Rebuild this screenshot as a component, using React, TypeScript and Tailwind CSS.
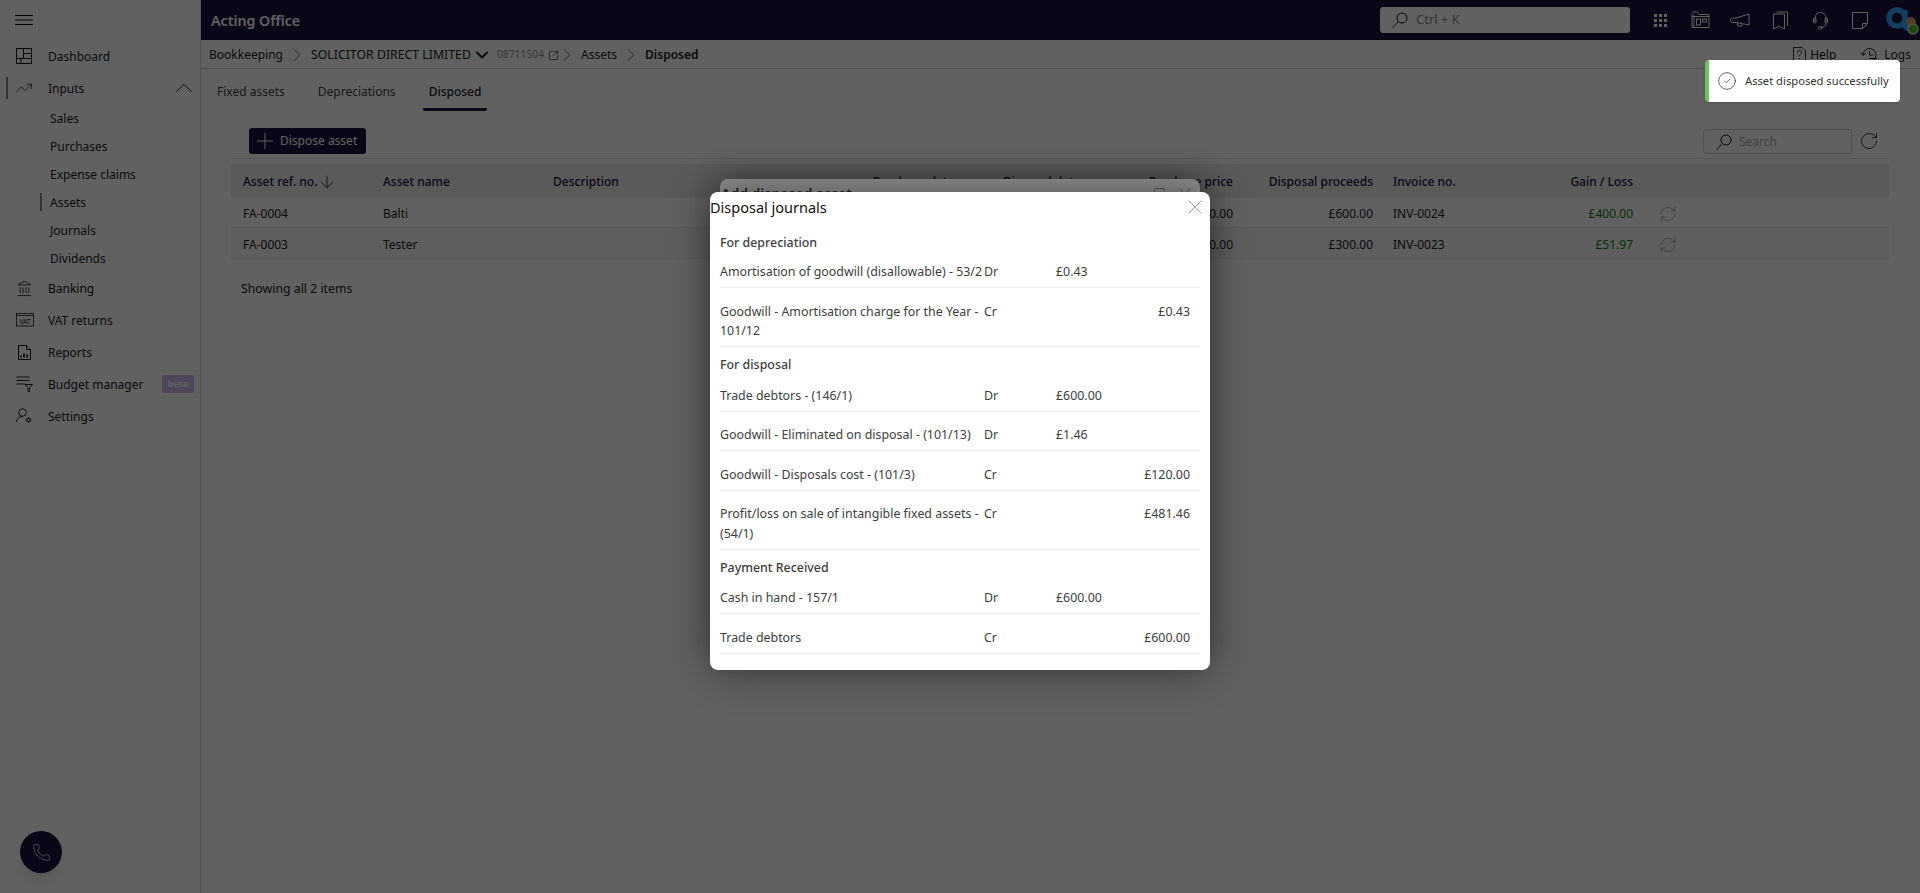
import React from 'react';
import {
  TrendingUp, ChevronUp, ChevronDown, ChevronRight, Landmark,
  Plus, ArrowDown, RotateCw, RefreshCw, X, Phone, CircleCheck, SquareArrowOutUpRight,
} from 'lucide-react';

const font = { fontFamily: '"Noto Sans", sans-serif' };

const HamburgerIcon = () => (
  <svg width="18" height="10" viewBox="0 0 18 10" fill="none" stroke="#111" strokeWidth="1">
    <path d="M0 0.5h18M0 5h18M0 9.5h18" />
  </svg>
);

const DashIcon = () => (
  <svg width="16" height="16" viewBox="0 0 16 16" fill="none" stroke="#111" strokeWidth="1">
    <rect x="0.5" y="0.5" width="15" height="15" />
    <path d="M7.5 0.5v10M7.5 5.5h8M0.5 10.5h15M5 10.5v5" />
  </svg>
);

const VatIcon = () => (
  <svg width="18" height="14" viewBox="0 0 18 14" fill="none" stroke="#111" strokeWidth="0.8">
    <rect x="0.5" y="0.5" width="17" height="12.5" />
    <path d="M0.5 2.5h17" />
    <text x="9" y="10.5" textAnchor="middle" fontSize="6.5" fill="#111" stroke="none" fontFamily="Liberation Sans">VAT</text>
  </svg>
);

const ReportIcon = () => (
  <svg width="13" height="15" viewBox="0 0 13 15" fill="none" stroke="#111" strokeWidth="1">
    <path d="M0.5 0.5h8l4 4v10h-12zM8.5 0.5v4h4" />
    <path d="M3 12.5v-2M6 12.5v-4M9 12.5v-3" strokeWidth="1.6" />
  </svg>
);

const BudgetIcon = () => (
  <svg width="17" height="16" viewBox="0 0 17 16" fill="none" stroke="#111" strokeWidth="0.9">
    <path d="M0.5 1h13M0.5 4.5h13M0.5 8h8" />
    <path d="M9 8.500h7.500l-3 3.300v3.700h-1.500v-3.700z" />
  </svg>
);

const SettingsIcon = () => (
  <svg width="16" height="16" viewBox="0 0 16 16" fill="none" stroke="#111" strokeWidth="0.9">
    <circle cx="6.500" cy="4.500" r="3.800" />
    <path d="M0.500 14c0-3 2-5.300 6-5.500" />
    <circle cx="12.500" cy="12" r="1.700" />
    <path d="M12.500 9v1.300M12.500 13.700V15M9.500 12h1.300M14.200 12h1.300M10.400 9.900l0.900 0.900M13.700 13.200l0.900 0.900M14.600 9.900l-0.900 0.900M11.300 13.200l-0.900 0.900" strokeWidth="0.800" />
  </svg>
);

const SearchIcon = ({ color = '#111' }: { color?: string }) => (
  <svg width="16" height="16" viewBox="0 0 16 16" fill="none" stroke={color} strokeWidth="1">
    <circle cx="10" cy="6" r="5" />
    <path d="M6.500 9.500L0.700 15.500" />
  </svg>
);

const FolderIcon = () => (
  <svg width="19" height="18" viewBox="0 0 19 18" fill="none" stroke="#fff" strokeWidth="1">
    <path d="M1 2.500V16.500h17V3.500H8L6.500 1H1.500M3 3.500v13" />
    <path d="M1 5.500h17" />
    <rect x="5.500" y="8" width="4" height="6" />
    <rect x="11.500" y="8" width="4" height="3" />
  </svg>
);

const MegaphoneIcon = () => (
  <svg width="20" height="14" viewBox="0 0 20 14" fill="none" stroke="#fff" strokeWidth="1">
    <path d="M19 1v11L6 9.500H2.500a1.800 1.800 0 0 1 0-4.500H6zM7.500 10v3h4.500v-1.500" />
  </svg>
);

const BookmarkIcon = () => (
  <svg width="15" height="19" viewBox="0 0 15 19" fill="none" stroke="#fff" strokeWidth="1">
    <path d="M0.500 3h11v15l-5.500-3-5.500 3zM3.500 1h11v14" />
  </svg>
);

const HeadsetIcon = () => (
  <svg width="15" height="19" viewBox="0 0 15 19" fill="none" stroke="#fff" strokeWidth="1">
    <path d="M2 11V7a5.500 5.500 0 0 1 11 0v4" />
    <rect x="0.500" y="7" width="2.500" height="5" rx="1" />
    <rect x="12" y="7" width="2.500" height="5" rx="1" />
    <path d="M13 12c0 3-2.500 4.500-4.500 4.500" />
    <rect x="5.500" y="15.500" width="3.500" height="2.500" rx="1" />
  </svg>
);

const NoteIcon = () => (
  <svg width="16" height="17" viewBox="0 0 16 17" fill="none" stroke="#fff" strokeWidth="1">
    <path d="M0.500 0.500h15v11l-5 5h-10zM15.500 11.500h-5v5" />
  </svg>
);

const HelpDocIcon = () => (
  <svg width="13" height="16" viewBox="0 0 13 16" fill="none" stroke="#222" strokeWidth="0.9">
    <path d="M0.500 0.500h8.500l3.500 3.500v11.500h-12z" />
    <path d="M4.500 5.500a2 2 0 1 1 3 1.700c-0.800 0.500-1 1-1 2M6.500 11v1.200" />
  </svg>
);

const LogsIcon = () => (
  <svg width="18" height="16" viewBox="0 0 18 16" fill="none" stroke="#222" strokeWidth="1">
    <path d="M3 8a6.500 6.500 0 1 1 2 4.700M0.500 5.500L3 8.500l3-2.500" />
    <path d="M9.500 4v4h4M9 11.500h8M9 14.500h8" />
  </svg>
);

const Logo = () => (
  <svg width="35" height="32" viewBox="0 0 35 32" fill="none" className="shrink-0">
    <circle cx="13" cy="14" r="8" stroke="#2ea6f5" strokeWidth="5.500" />
    <path d="M21 6v14c0 3 1 4.500 3 5" stroke="#2ea6f5" strokeWidth="5" />
    <circle cx="27" cy="18" r="5" fill="#c9a36b" />
    <circle cx="29" cy="25" r="5" fill="#56c01e" stroke="#dddddd" strokeWidth="1.500" />
  </svg>
);

const subItems = ['Sales', 'Purchases', 'Expense claims', 'Assets', 'Journals', 'Dividends'];

const navBottom = [
  { label: 'Banking', icon: <Landmark size={17} strokeWidth={1.200} /> },
  { label: 'VAT returns', icon: <VatIcon /> },
  { label: 'Reports', icon: <span className="pl-[2px]"><ReportIcon /></span> },
  { label: 'Budget manager', icon: <BudgetIcon />, beta: true },
  { label: 'Settings', icon: <SettingsIcon /> },
];

function Sidebar() {
  return (
    <aside className="w-[201px] shrink-0 border-r border-[#dcdcdc] bg-white text-[12px] text-[#222] flex flex-col relative">
      <div className="h-10 flex items-center pl-[15px]">
        <HamburgerIcon />
      </div>
      <div className="h-[32px] flex items-center pl-[16px] gap-[16px]">
        <DashIcon />
        <span className="pt-[2px]">Dashboard</span>
      </div>
      <div className="h-[32px] flex items-center pl-[15px] relative">
        <span className="w-[2px] h-[22px] bg-[#888] absolute left-[6px] top-[5px]" />
        <span className="w-[33px]"><TrendingUp size={18} strokeWidth={1} /></span>
        <span className="pt-[2px]">Inputs</span>
        <ChevronUp size={30} strokeWidth={0.800} className="ml-auto mr-[1px]" />
      </div>
      {subItems.map(s => (
        <div key={s} className="h-[28px] flex items-center pl-[50px] pt-[2px] relative">
          {s === 'Assets' && <span className="w-[2px] h-[18px] bg-[#888] absolute left-[40px] top-[5px]" />}
          {s}
        </div>
      ))}
      {navBottom.map(n => (
        <div key={n.label} className="h-[32px] flex items-center">
          <span className="w-[48px] pl-[16px] flex items-center">{n.icon}</span>
          <span className="pt-[2px]">{n.label}</span>
          {n.beta && (
            <span className="ml-auto mr-[6px] w-[32px] h-[18px] rounded-[2px] bg-[#d0b8f0] text-white text-[9px] font-bold flex items-center justify-center">beta</span>
          )}
        </div>
      ))}
      <div className="absolute left-[20px] top-[831px] w-[42px] h-[42px] rounded-full bg-[#1a103f] flex items-center justify-center shadow-lg">
        <Phone size={19} strokeWidth={0.900} color="#fff" />
      </div>
    </aside>
  );
}

function TopBar() {
  return (
    <div className="h-10 bg-[#1a103f] flex items-center pl-[10px]">
      <span className="text-white font-semibold text-[14.200px] pt-[2px]">Acting Office</span>
      <div className="ml-auto mr-[10px] w-[250px] h-[26px] bg-white rounded-[3px] flex items-center pl-[12px] text-[#888] text-[13px] gap-[8px]">
        <SearchIcon />
        Ctrl + K
      </div>
      <div className="flex items-center">
        <span className="w-[40px] flex justify-center">
          <span className="grid grid-cols-3 gap-[2px]">
            {Array.from({ length: 9 }).map((_, i) => <span key={i} className="w-[3px] h-[3px] bg-white" />)}
          </span>
        </span>
        <span className="w-[40px] flex justify-center"><FolderIcon /></span>
        <span className="w-[40px] flex justify-center"><MegaphoneIcon /></span>
        <span className="w-[40px] flex justify-center"><BookmarkIcon /></span>
        <span className="w-[40px] flex justify-center"><HeadsetIcon /></span>
        <span className="w-[40px] flex justify-center"><NoteIcon /></span>
        <span className="w-[40px] pl-[4px]"><Logo /></span>
      </div>
    </div>
  );
}

function Breadcrumb() {
  return (
    <div className="h-[29px] border-b border-[#d6d6d6] flex items-center pt-[2px] pl-[8px] pr-[9px] text-[12px] text-[#222]">
      <span>Bookkeeping</span>
      <ChevronRight size={22} strokeWidth={1} className="mx-[3px]" color="#666" />
      <span className="text-[12.300px]">SOLICITOR DIRECT LIMITED</span>
      <ChevronDown size={20} strokeWidth={2.400} className="ml-[1px]" />
      <span className="ml-[5px] text-[10.300px] text-[#999]">08711504</span>
      <SquareArrowOutUpRight size={11} strokeWidth={1.500} className="ml-[4px]" />
      <ChevronRight size={22} strokeWidth={1} className="-ml-[3px] mr-[3px]" color="#666" />
      <span>Assets</span>
      <ChevronRight size={22} strokeWidth={1} className="mx-[3px]" color="#666" />
      <span className="font-semibold">Disposed</span>
      <span className="ml-auto flex items-center gap-[4px]"><HelpDocIcon /> Help</span>
      <span className="ml-[24px] flex items-center gap-[6px]"><LogsIcon /> Logs</span>
    </div>
  );
}

function Tabs() {
  return (
    <div className="h-[42px] flex items-start pl-[10px] gap-[21px] text-[12px] text-[#444]">
      <span className="h-[42px] pt-[14px] px-[6px]">Fixed assets</span>
      <span className="h-[42px] pt-[14px] px-[6px]">Depreciations</span>
      <span className="h-[42px] pt-[14px] px-[6px] font-medium text-[#222] border-b-[3px] border-[#1a103f] rounded-b-[2px]">Disposed</span>
    </div>
  );
}

const cols = 'grid grid-cols-[152px_170px_320px_130px_120px_110px_140px_120px_140px_1fr]';

function AssetTable() {
  return (
    <div className="pl-[30px] pr-[31px] pt-[17px] text-[12px]">
      <div className="flex items-start h-[31px] pl-[18px] pr-[10px] border-b border-[#e4e4e4]">
        <button className="h-[26px] w-[117px] rounded-[3px] bg-[#1a103f] text-white flex items-center pl-[3px] gap-[2px] text-[12px]">
          <Plus size={26} strokeWidth={0.900} /> Dispose asset
        </button>
        <div className="ml-auto mt-[1px] w-[149px] h-[25px] rounded-[3px] border border-[#ccc] flex items-center pl-[12px] gap-[7px] text-[#aaa]">
          <SearchIcon /> Search
        </div>
        <RotateCw size={20} strokeWidth={0.900} className="ml-[7px] mt-[3px]" />
      </div>
      <div className={`${cols} mt-[5px] h-[34px] pt-[2px] items-center bg-[#ececec] text-[#1a103f] font-medium`}>
        <span className="pl-[12px] flex items-center">Asset ref. no. <ArrowDown size={20} strokeWidth={1} color="#222" /></span>
        <span>Asset name</span>
        <span>Description</span>
        <span>Purchase date</span>
        <span>Disposal date</span>
        <span className="text-right">Purchase price</span>
        <span className="text-right whitespace-nowrap">Disposal proceeds</span>
        <span className="pl-[20px]">Invoice no.</span>
        <span className="text-right">Gain / Loss</span>
      </div>
      {[
        ['FA-0004', 'Balti', '£200.00', '£600.00', 'INV-0024', '£400.00', 'h-[30px] pt-[2px]', ''],
        ['FA-0003', 'Tester', '£240.00', '£300.00', 'INV-0023', '£51.97', 'h-[31px] pt-[3px]', 'bg-[#f6f6f6]'],
      ].map(r => (
        <div key={r[0]} className={`${cols} ${r[6]} ${r[7]} items-center border-b border-[#e6e6e6] text-[#222]`}>
          <span className="pl-[12px]">{r[0]}</span>
          <span>{r[1]}</span>
          <span />
          <span />
          <span />
          <span className="text-right">{r[2]}</span>
          <span className="text-right">{r[3]}</span>
          <span className="pl-[20px]">{r[4]}</span>
          <span className="text-right text-[#1a7a1a]">{r[5]}</span>
          <span className="pl-[26px]"><RefreshCw size={18} strokeWidth={0.800} color="#888" /></span>
        </div>
      ))}
      <div className="mt-[21px] pl-[10px] text-[12.300px] text-[#222]">Showing all 2 items</div>
    </div>
  );
}

type Line = { name: string; side: 'Dr' | 'Cr'; amount: string; nowrap?: boolean };
const sections: { title: string; lines: Line[] }[] = [
  { title: 'For depreciation', lines: [
    { name: 'Amortisation of goodwill (disallowable) - 53/2', side: 'Dr', amount: '£0.43', nowrap: true },
    { name: 'Goodwill - Amortisation charge for the Year - 101/12', side: 'Cr', amount: '£0.43' },
  ] },
  { title: 'For disposal', lines: [
    { name: 'Trade debtors - (146/1)', side: 'Dr', amount: '£600.00' },
    { name: 'Goodwill - Eliminated on disposal - (101/13)', side: 'Dr', amount: '£1.46' },
    { name: 'Goodwill - Disposals cost - (101/3)', side: 'Cr', amount: '£120.00' },
    { name: 'Profit/loss on sale of intangible fixed assets - (54/1)', side: 'Cr', amount: '£481.46' },
  ] },
  { title: 'Payment Received', lines: [
    { name: 'Cash in hand - 157/1', side: 'Dr', amount: '£600.00' },
    { name: 'Trade debtors', side: 'Cr', amount: '£600.00' },
  ] },
];

function JournalsModal() {
  return (
    <div className="absolute left-[710px] top-[192px] w-[500px] h-[478px] bg-white rounded-[8px] shadow-[0_0_40px_rgba(0,0,0,0.45)] text-[12.400px] text-[#3d3d3d]">
      <div className="h-[33px] pb-[2px] flex items-center text-[14.500px] text-[#111]">
        Disposal journals
        <X size={24} strokeWidth={0.900} color="#999" className="ml-auto mr-[3px] -mt-[2px]" />
      </div>
      <div className="px-[10px]">
        {sections.map((s, i) => (
          <div key={s.title}>
            <div className={`${i === 0 ? 'h-[23.600px] pt-[7.500px]' : 'h-[25px] pt-[8.400px]'} leading-[19.500px] font-medium`}>{s.title}</div>
            {s.lines.map(l => (
              <div key={l.name} className="grid grid-cols-[264px_72px_1fr_1fr] pt-[13.500px] pb-[5.500px] border-b border-[#eeeeee] leading-[19.500px]">
                <span className={l.nowrap ? 'whitespace-nowrap' : 'pr-[4px]'}>{l.name}</span>
                <span>{l.side}</span>
                <span>{l.side === 'Dr' ? l.amount : ''}</span>
                <span className="text-right pr-[10px]">{l.side === 'Cr' ? l.amount : ''}</span>
              </div>
            ))}
          </div>
        ))}
      </div>
    </div>
  );
}

export default function App() {
  return (
    <div className="relative w-[1920px] h-[893px] overflow-hidden bg-white flex" style={font}>
      <Sidebar />
      <main className="flex-1 min-w-0">
        <TopBar />
        <Breadcrumb />
        <Tabs />
        <AssetTable />
      </main>
      {/* dim layer, then the stacked dialogs */}
      <div className="absolute inset-0 bg-black/[0.62]" />
      <div className="absolute left-[720px] top-[179px] w-[480px] h-[470px] rounded-[8px] bg-[#8f8f8f] shadow-[0_0_30px_rgba(0,0,0,0.3)] text-[#222] font-semibold text-[14px] pl-[1px] pt-[4px] flex items-start">
        Add disposed asset
        <span className="ml-auto mt-[5px] mr-[9px] w-[11px] h-[13px] border border-[#555] rounded-[2px]" />
        <X size={22} strokeWidth={1} color="#555" className="mr-[4px]" />
      </div>
      <JournalsModal />
      <div className="absolute left-[1705px] top-[60px] w-[195px] h-[42px] rounded-[4px] bg-white border-l-[4px] border-[#6fc35f] flex items-center pl-[8px] gap-[8px] text-[11.200px] text-[#333] shadow">
        <CircleCheck size={20} strokeWidth={0.900} />
        Asset disposed successfully
      </div>
    </div>
  );
}
